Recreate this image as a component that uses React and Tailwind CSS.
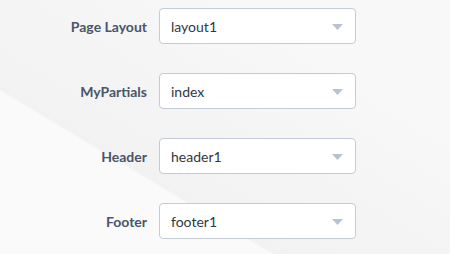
import React from "react";

const rows = [
  { label: "Page Layout", value: "layout1" },
  { label: "MyPartials", value: "index" },
  { label: "Header", value: "header1" },
  { label: "Footer", value: "footer1" },
];

const SelectBox = ({ value }) => (
  <div className="relative flex h-[36px] w-[197px] items-center rounded-[4px] border border-[#c3cbd8] bg-white pl-[11px] text-[14px] text-[#2d3748]">
    <span>{value}</span>
    <svg
      className="absolute right-[12px] top-[15px]"
      width="11"
      height="6"
      viewBox="0 0 11 6"
    >
      <path d="M0 0H11L5.5 6Z" fill="#b8c2d2" />
    </svg>
  </div>
);

export default function App() {
  return (
    <div
      className="h-[254px] w-[450px] overflow-hidden bg-[linear-gradient(211deg,#f8f8f8_25%,#f2f2f3_68.5%,#fafafa_69%,#fafafa_100%)] pt-[8px]"
      style={{ fontFamily: "Lato, 'Noto Sans', sans-serif" }}
    >
      <div className="flex flex-col gap-[29px]">
        {rows.map((row) => (
          <div key={row.label} className="flex items-center">
            <div className="w-[147px] text-right text-[14px] font-bold text-[#4a5568]">
              {row.label}
            </div>
            <div className="ml-[12px]">
              <SelectBox value={row.value} />
            </div>
          </div>
        ))}
      </div>
    </div>
  );
}
